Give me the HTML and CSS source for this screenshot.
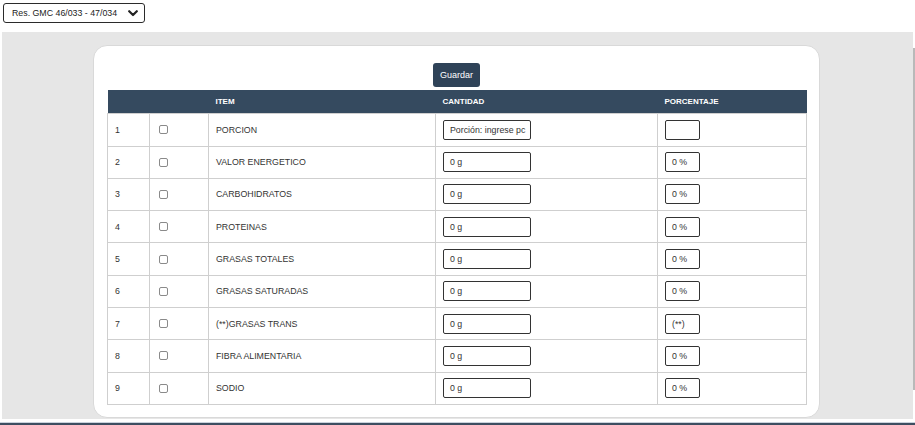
FILE: index.html
```html
<!DOCTYPE html>
<html>
<head>
<meta charset="utf-8">
<link rel="stylesheet" href="styles.css">
</head>
<body>
<div class="topbar">
  <div class="select">
    <span>Res. GMC 46/033 - 47/034</span>
    <svg class="chev" width="10" height="7" viewBox="0 0 10 7"><polyline points="1.2,1.2 5,5 8.8,1.2" fill="none" stroke="#222" stroke-width="2.2" stroke-linecap="round" stroke-linejoin="round"/></svg>
  </div>
</div>
<div class="stage">
  <div class="panel">
    <div class="card">
      <div class="actions"><button class="btn">Guardar</button></div>
      <table class="grid">
        <colgroup>
          <col class="c1"><col class="c2"><col class="c3"><col class="c4"><col class="c5">
        </colgroup>
        <thead>
          <tr><th></th><th></th><th>ITEM</th><th>CANTIDAD</th><th>PORCENTAJE</th></tr>
        </thead>
        <tbody>
          <tr class="first"><td>1</td><td><span class="cb"></span></td><td>PORCION</td><td><span class="inp">Porción: ingrese pc</span></td><td><span class="inp pct"></span></td></tr>
          <tr><td>2</td><td><span class="cb"></span></td><td>VALOR ENERGETICO</td><td><span class="inp">0 g</span></td><td><span class="inp pct">0 %</span></td></tr>
          <tr><td>3</td><td><span class="cb"></span></td><td>CARBOHIDRATOS</td><td><span class="inp">0 g</span></td><td><span class="inp pct">0 %</span></td></tr>
          <tr><td>4</td><td><span class="cb"></span></td><td>PROTEINAS</td><td><span class="inp">0 g</span></td><td><span class="inp pct">0 %</span></td></tr>
          <tr><td>5</td><td><span class="cb"></span></td><td>GRASAS TOTALES</td><td><span class="inp">0 g</span></td><td><span class="inp pct">0 %</span></td></tr>
          <tr><td>6</td><td><span class="cb"></span></td><td>GRASAS SATURADAS</td><td><span class="inp">0 g</span></td><td><span class="inp pct">0 %</span></td></tr>
          <tr><td>7</td><td><span class="cb"></span></td><td>(**)GRASAS TRANS</td><td><span class="inp">0 g</span></td><td><span class="inp pct">(**)</span></td></tr>
          <tr><td>8</td><td><span class="cb"></span></td><td>FIBRA ALIMENTARIA</td><td><span class="inp">0 g</span></td><td><span class="inp pct">0 %</span></td></tr>
          <tr><td>9</td><td><span class="cb"></span></td><td>SODIO</td><td><span class="inp">0 g</span></td><td><span class="inp pct">0 %</span></td></tr>
        </tbody>
      </table>
    </div>
  </div>
  <div class="scroll"><div class="thumb"></div></div>
</div>
<div class="bottomline"></div>
</body>
</html>
```
FILE: styles.css
```css
* { box-sizing: border-box; }
html, body { margin: 0; padding: 0; background: #fff; }
body {
  font-family: "Liberation Sans", Arial, sans-serif;
  color: #333;
  width: 915px;
  height: 425px;
  overflow: hidden;
}
.topbar { padding: 3px 0 0 3px; height: 32px; }
.select {
  width: 142px;
  height: 20px;
  border: 1px solid #2b2b2b;
  border-radius: 3px;
  display: flex;
  align-items: center;
  justify-content: space-between;
  padding: 0 6px 0 8px;
  font-size: 8.8px;
  color: #222;
}
.chev { display: block; }
.stage { display: flex; height: 387px; }
.panel {
  margin-left: 2px;
  width: 911px;
  height: 387px;
  background: #e6e6e6;
  padding-top: 13px;
  display: flex;
  justify-content: center;
}
.card {
  width: 727px;
  height: 373px;
  background: #fff;
  border: 1px solid #d9d9d9;
  border-radius: 14px;
  padding: 17px 13px 0 13px;
  margin-left: -2px;
}
.actions { display: flex; justify-content: center; margin-bottom: 3px; }
.btn {
  height: 24px;
  padding: 0 7px;
  background: #2f4358;
  color: #fff;
  border: none;
  border-radius: 3px;
  font-family: "Liberation Sans", Arial, sans-serif;
  font-size: 9px;
}
.scroll { width: 2px; margin-top: 16px; height: 359px; display: flex; }
.thumb { width: 2px; height: 342px; background: #b9b9b9; }
.grid {
  width: 699px;
  border-collapse: collapse;
  table-layout: fixed;
}
.c1 { width: 42px; }
.c2 { width: 59px; }
.c3 { width: 227px; }
.c4 { width: 222px; }
.c5 { width: 149px; }
.grid th {
  background: #354a5f;
  color: #fff;
  font-size: 8px;
  font-weight: bold;
  text-align: left;
  height: 23px;
  padding: 0 7px;
  vertical-align: middle;
}
.grid td {
  border: 1px solid #cfcfcf;
  height: 32.3px;
  padding: 0 7px;
  font-size: 8.8px;
  vertical-align: middle;
  color: #333;
}
.grid td:nth-child(4), .grid td:nth-child(5) { padding-left: 7px; }
.grid tr.first td { height: 33px; }
.cb {
  display: block;
  width: 9px;
  height: 9px;
  border: 1px solid #8a8a8a;
  border-radius: 2px;
  margin-left: 2px;
}
.inp {
  display: flex;
  align-items: center;
  width: 88px;
  height: 20px;
  border: 1px solid #333;
  border-radius: 2px;
  padding-left: 6px;
  font-size: 8.8px;
  color: #333;
  white-space: nowrap;
  overflow: hidden;
}
.inp.pct { width: 35px; }
.bottomline {
  margin-top: 3px;
  height: 3px;
  border-top: 1px solid #c9d2dc;
  background: #3d4e61;
}
```
